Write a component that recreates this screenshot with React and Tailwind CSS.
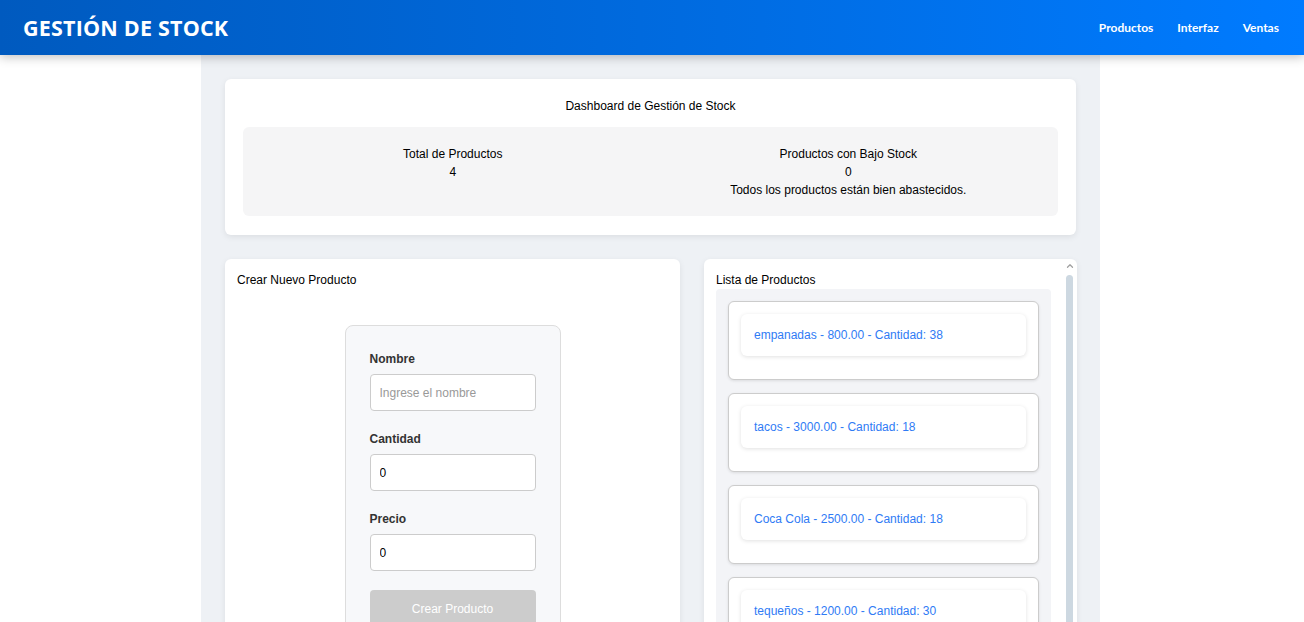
import { ChevronUp } from 'lucide-react';

const productos = [
  { nombre: 'empanadas', precio: '800.00', cantidad: 38 },
  { nombre: 'tacos', precio: '3000.00', cantidad: 18 },
  { nombre: 'Coca Cola', precio: '2500.00', cantidad: 18 },
  { nombre: 'tequeños', precio: '1200.00', cantidad: 30 },
];

function Campo({ label, value, placeholder }) {
  return (
    <div className="mb-[19px]">
      <label className="block text-[12px] leading-[18px] font-bold text-[#333] mb-[6px]">{label}</label>
      <input
        readOnly
        value={value}
        placeholder={placeholder}
        className="block w-full h-[37px] px-[9px] text-[12px] text-black bg-white border border-[#ccc] rounded-[4px] placeholder:text-[#999] outline-none"
      />
    </div>
  );
}

export default function App() {
  return (
    <div className="h-[622px] overflow-hidden bg-white text-black font-['Liberation_Sans',Arial,sans-serif] text-[12px] leading-[18px]">
      <header className="relative z-10 h-[55px] flex items-center justify-between pl-[23px] pr-[25px] bg-gradient-to-r from-[#005abf] to-[#007bff] shadow-[0_2px_10px_rgba(0,0,0,0.25)]">
        <h1 className="text-white font-['Open_Sans',sans-serif] font-bold text-[21.5px] tracking-[0.2px]">GESTIÓN DE STOCK</h1>
        <nav className="flex gap-[24px] font-['Lato',sans-serif] font-bold text-[12px] text-white">
          <span>Productos</span>
          <span>Interfaz</span>
          <span>Ventas</span>
        </nav>
      </header>

      <main className="w-[899px] ml-[201px] bg-[#eef1f5] min-h-[567px] px-[24px] pt-[24px]">
        <section className="bg-white rounded-[6px] shadow-[0_2px_6px_rgba(0,0,0,0.08)] px-[18px] pt-[18px] pb-[19px]">
          <h2 className="text-center">Dashboard de Gestión de Stock</h2>
          <div className="mt-[12px] bg-[#f5f5f6] rounded-[6px] grid grid-cols-2 px-[12px] pt-[18px] pb-[17px] text-center">
            <div>
              <p>Total de Productos</p>
              <p>4</p>
            </div>
            <div>
              <p>Productos con Bajo Stock</p>
              <p>0</p>
              <p>Todos los productos están bien abastecidos.</p>
            </div>
          </div>
        </section>

        <div className="mt-[24px] grid grid-cols-[455px_373px] gap-[24px]">
          <section className="bg-white rounded-[6px] shadow-[0_2px_6px_rgba(0,0,0,0.08)] p-[12px] h-[400px]">
            <h2>Crear Nuevo Producto</h2>
            <div className="flex justify-center mt-[36px]">
              <form className="w-[216px] bg-[#f7f8fa] border border-[#ddd] rounded-[8px] px-[24px] pt-[24px] pb-[24px]">
                <Campo label="Nombre" value="" placeholder="Ingrese el nombre" />
                <Campo label="Cantidad" value="0" />
                <Campo label="Precio" value="0" />
                <button type="button" className="w-full h-[38px] rounded-[4px] bg-[#cccccc] text-white text-[12px] font-medium">
                  Crear Producto
                </button>
              </form>
            </div>
          </section>

          <section className="bg-white rounded-[6px] shadow-[0_2px_6px_rgba(0,0,0,0.08)] h-[400px] flex">
            <div className="flex-1 min-w-0 pl-[12px] pr-[11px] pt-[12px]">
              <h2 className="leading-[17px] pt-[1px]">Lista de Productos</h2>
              <div className="bg-[#f3f4f7] rounded-[4px] px-[12px] pt-[12px] flex flex-col gap-[13px] h-[400px]">
                {productos.map((p) => (
                  <div key={p.nombre} className="border border-[#ccc] rounded-[6px] bg-white shadow-[0_1px_3px_rgba(0,0,0,0.1)] p-[12px] pb-[23px]">
                    <div className="bg-white rounded-[6px] shadow-[0_1px_4px_rgba(0,0,0,0.12)] px-[13px] py-[12px] text-[#2f7bf5]">
                      {p.nombre} - {p.precio} - Cantidad: {p.cantidad}
                    </div>
                  </div>
                ))}
              </div>
            </div>
            <div className="w-[15px] flex flex-col items-center pt-[2px]">
              <ChevronUp className="w-[10px] h-[10px] text-[#a0a0a0]" strokeWidth={3} />
              <div className="mt-[4px] w-[7px] flex-1 rounded-t-full bg-[#cdd8e1]" />
            </div>
          </section>
        </div>
      </main>
    </div>
  );
}
